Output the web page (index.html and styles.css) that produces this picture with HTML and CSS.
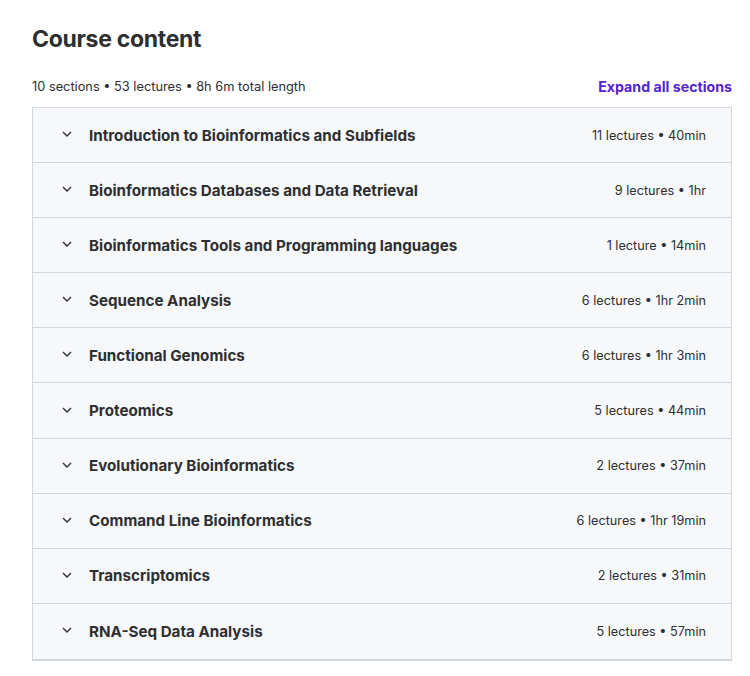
FILE: index.html
```html
<!DOCTYPE html>
<html lang="en">
<head>
  <meta charset="UTF-8" />
  <meta name="viewport" content="width=device-width, initial-scale=1.0" />
  <title>Course content</title>
  <link rel="stylesheet" href="styles.css">
</head>
<body>
  <div class="course-content">
    <h2 class="title">Course content</h2>
    <div class="summary">
      <span class="stats">10 sections • 53 lectures • 8h 6m total length</span>
      <button class="expand">Expand all sections</button>
    </div>
    <div class="sections">
      <div class="section">
        <svg class="chevron" viewBox="0 0 10 6"><path d="M1 1l4 4 4-4" /></svg>
        <span class="name">Introduction to Bioinformatics and Subfields</span>
        <span class="meta">11 lectures • 40min</span>
      </div>
      <div class="section">
        <svg class="chevron" viewBox="0 0 10 6"><path d="M1 1l4 4 4-4" /></svg>
        <span class="name">Bioinformatics Databases and Data Retrieval</span>
        <span class="meta">9 lectures • 1hr</span>
      </div>
      <div class="section">
        <svg class="chevron" viewBox="0 0 10 6"><path d="M1 1l4 4 4-4" /></svg>
        <span class="name">Bioinformatics Tools and Programming languages</span>
        <span class="meta">1 lecture • 14min</span>
      </div>
      <div class="section">
        <svg class="chevron" viewBox="0 0 10 6"><path d="M1 1l4 4 4-4" /></svg>
        <span class="name">Sequence Analysis</span>
        <span class="meta">6 lectures • 1hr 2min</span>
      </div>
      <div class="section">
        <svg class="chevron" viewBox="0 0 10 6"><path d="M1 1l4 4 4-4" /></svg>
        <span class="name">Functional Genomics</span>
        <span class="meta">6 lectures • 1hr 3min</span>
      </div>
      <div class="section">
        <svg class="chevron" viewBox="0 0 10 6"><path d="M1 1l4 4 4-4" /></svg>
        <span class="name">Proteomics</span>
        <span class="meta">5 lectures • 44min</span>
      </div>
      <div class="section">
        <svg class="chevron" viewBox="0 0 10 6"><path d="M1 1l4 4 4-4" /></svg>
        <span class="name">Evolutionary Bioinformatics</span>
        <span class="meta">2 lectures • 37min</span>
      </div>
      <div class="section">
        <svg class="chevron" viewBox="0 0 10 6"><path d="M1 1l4 4 4-4" /></svg>
        <span class="name">Command Line Bioinformatics</span>
        <span class="meta">6 lectures • 1hr 19min</span>
      </div>
      <div class="section">
        <svg class="chevron" viewBox="0 0 10 6"><path d="M1 1l4 4 4-4" /></svg>
        <span class="name">Transcriptomics</span>
        <span class="meta">2 lectures • 31min</span>
      </div>
      <div class="section">
        <svg class="chevron" viewBox="0 0 10 6"><path d="M1 1l4 4 4-4" /></svg>
        <span class="name">RNA-Seq Data Analysis</span>
        <span class="meta">5 lectures • 57min</span>
      </div>
    </div>
  </div>
</body>
</html>
```

FILE: styles.css
```css
body {
  margin: 0;
  background: #ffffff;
  font-family: Inter, "Noto Sans", sans-serif;
  color: #2d2f31;
}
.course-content {
  width: 700px;
  padding: 24px 0 0 32px;
}
.title {
  margin: 0;
  font-size: 23px;
  font-weight: 700;
  letter-spacing: -0.3px;
  line-height: 30px;
}
.summary {
  display: flex;
  justify-content: space-between;
  align-items: center;
  margin-top: 24px;
  margin-bottom: 12px;
  font-size: 12.8px;
}
.stats {
  color: #2d2f31;
}
.expand {
  background: none;
  border: none;
  padding: 0;
  font-family: inherit;
  font-size: 14.2px;
  font-weight: 700;
  color: #5624d0;
  cursor: pointer;
}
.sections {
  border: 1px solid #d1d7dc;
  border-bottom-width: 2px;
}
.section {
  display: flex;
  align-items: center;
  height: 55.1px;
  box-sizing: border-box;
  padding: 0 25px 0 29px;
  background: #f7f8fa;
  border-bottom: 1px solid #d1d7dc;
}
.section:last-child {
  border-bottom: none;
}
.chevron {
  width: 10px;
  height: 6px;
  margin-right: 17px;
  margin-top: -2px;
  fill: none;
  stroke: #2d2f31;
  stroke-width: 1.4;
}
.name {
  flex: 1;
  font-size: 15.2px;
  font-weight: 700;
}
.meta {
  font-size: 12.7px;
  color: #2d2f31;
}
```
